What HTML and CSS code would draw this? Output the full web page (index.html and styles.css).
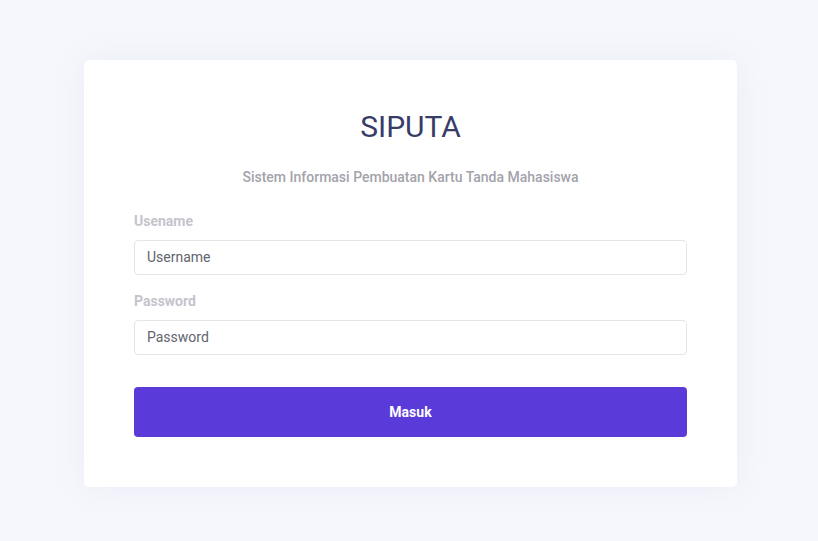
FILE: index.html
```html
<!DOCTYPE html>
<html lang="id">
<head>
<meta charset="utf-8">
<title>SIPUTA</title>
<link rel="stylesheet" href="styles.css">
</head>
<body>
<main class="page">
  <section class="card">
    <h1 class="title">SIPUTA</h1>
    <p class="subtitle">Sistem Informasi Pembuatan Kartu Tanda Mahasiswa</p>
    <form class="form">
      <div class="field">
        <label class="label" for="u">Usename</label>
        <input class="input" id="u" type="text" placeholder="Username">
      </div>
      <div class="field">
        <label class="label" for="p">Password</label>
        <input class="input" id="p" type="password" placeholder="Password">
      </div>
      <button class="btn" type="button">Masuk</button>
    </form>
  </section>
</main>
</body>
</html>
```
FILE: styles.css
```css
* { box-sizing: border-box; }
html, body { margin: 0; padding: 0; }
body {
  background: #f6f7fc;
  font-family: Roboto, "Liberation Sans", sans-serif;
  width: 818px;
  height: 541px;
  overflow: hidden;
}
.page {
  padding: 60px 81px 0 84px;
}
.card {
  width: 653px;
  height: 427px;
  background: #fff;
  border-radius: 5px;
  box-shadow: 0 0 30px rgba(160, 165, 210, 0.12);
  padding: 49px 50px 50px;
}
.title {
  margin: 0;
  text-align: center;
  font-size: 30px;
  line-height: 36px;
  font-weight: 400;
  color: #383c68;
}
.subtitle {
  margin: 22px 0 0;
  text-align: center;
  font-size: 14px;
  line-height: 20px;
  font-weight: 500;
  color: #a3a3ab;
}
.form {
  margin-top: 24px;
  display: flex;
  flex-direction: column;
}
.field {
  display: flex;
  flex-direction: column;
}
.field + .field { margin-top: 16px; }
.label {
  font-size: 14px;
  line-height: 20px;
  font-weight: 700;
  color: #c4c4cc;
  margin-bottom: 9px;
}
.input {
  height: 35px;
  border: 1px solid #e6e6ea;
  border-radius: 4px;
  padding: 0 12px 1px;
  font-family: inherit;
  font-size: 14px;
  color: #555;
  outline: none;
}
.input::placeholder { color: #62646e; opacity: 1; }
.btn {
  margin-top: 32px;
  height: 50px;
  border: none;
  border-radius: 4px;
  background: #5a3bd9;
  color: #fff;
  font-family: inherit;
  font-size: 14px;
  font-weight: 700;
}
```
